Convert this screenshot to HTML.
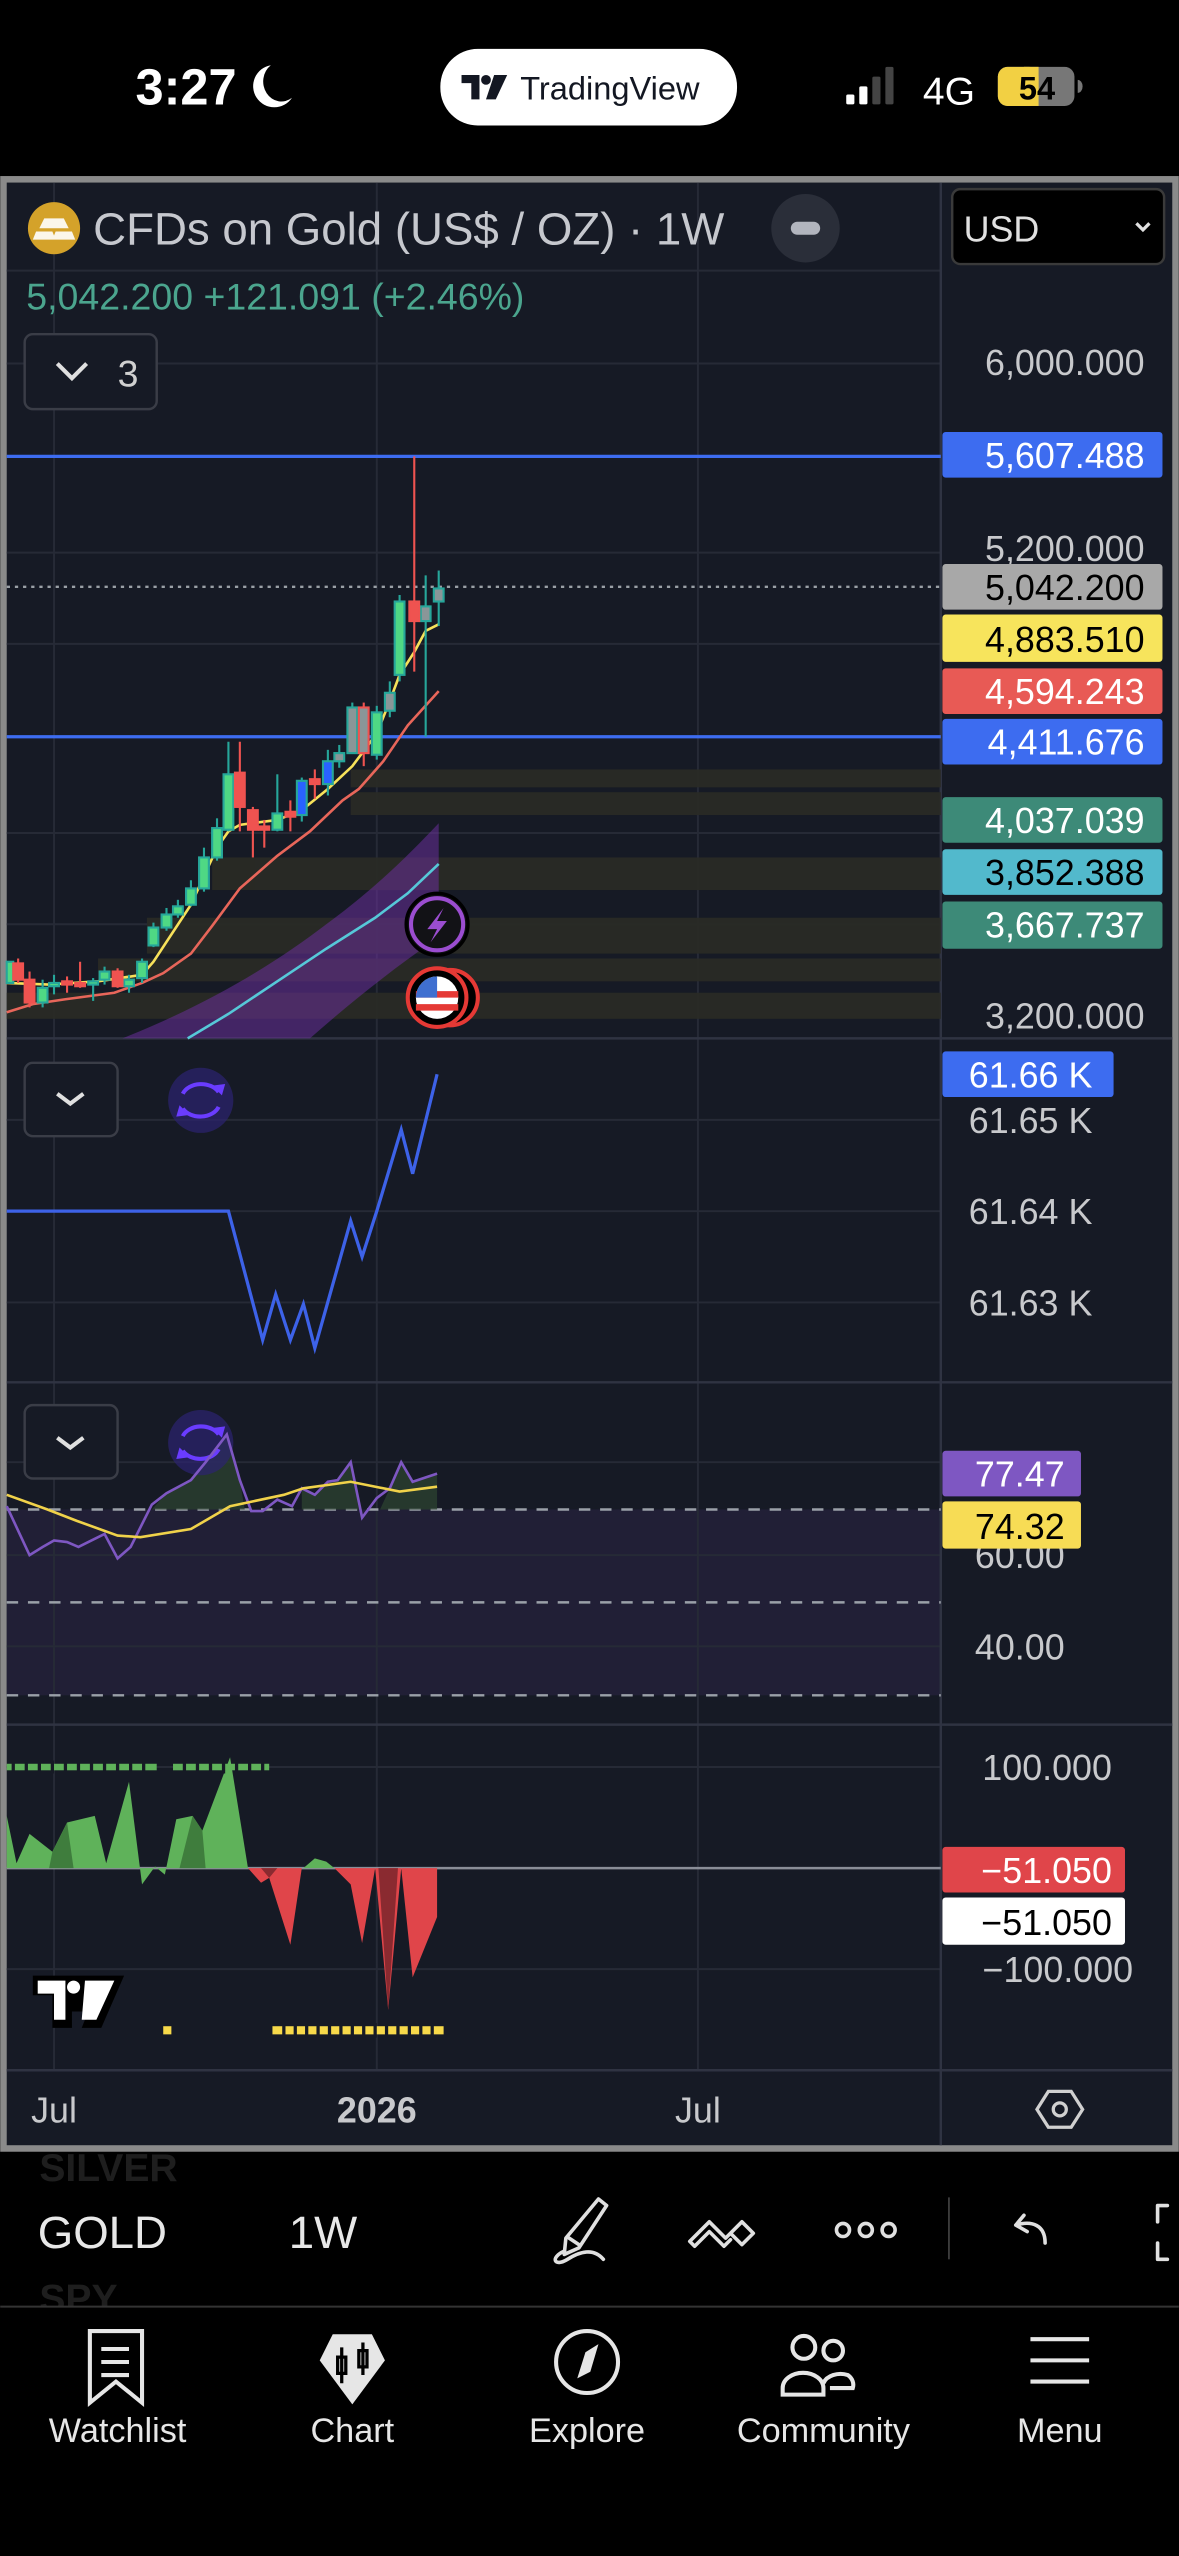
<!DOCTYPE html>
<html><head><meta charset="utf-8"><style>
html,body{margin:0;padding:0;background:#000;width:1179px;height:2556px;overflow:hidden}
svg{display:block}
text{font-family:"Liberation Sans",sans-serif}
</style></head><body>
<svg width="1179" height="2556" viewBox="0 0 723 1568" xmlns="http://www.w3.org/2000/svg">
<rect width="723" height="1568" fill="#000"/>
<!-- status bar -->
<text x="83" y="64" font-size="31" fill="#fff" font-weight="bold">3:27</text>
<path d="M166 40 a13 13 0 1 0 13 20 a10 11 0 0 1 -13 -20z" fill="#fff"/>
<rect x="270" y="30" width="182" height="47" rx="23" fill="#fff"/>
<path d="M283 46h11v15h-5v-10h-6z" fill="#131722"/><circle cx="298" cy="49" r="3" fill="#131722"/><path d="M303 46h8l-7 15h-6z" fill="#131722"/>
<text x="319" y="61" font-size="20" fill="#131722">TradingView</text>
<rect x="519" y="58" width="5" height="6" rx="1" fill="#fff"/><rect x="527" y="53" width="5" height="11" rx="1" fill="#fff"/><rect x="535" y="47" width="5" height="17" rx="1" fill="#444"/><rect x="543" y="41" width="5" height="23" rx="1" fill="#444"/>
<text x="566" y="64" font-size="24" fill="#fff">4G</text>
<rect x="612" y="41" width="47" height="24" rx="6" fill="#777"/><rect x="612" y="41" width="25" height="24" rx="6" fill="#f2d043"/><rect x="628" y="41" width="9" height="24" fill="#f2d043"/>
<text x="636" y="61" font-size="20" fill="#000" text-anchor="middle" font-weight="bold">54</text>
<path d="M661 49 a3 4 0 0 1 0 8z" fill="#777"/>
<!-- chart frame -->
<rect x="0" y="108" width="723" height="1212" fill="#8a8a8a"/>
<rect x="4" y="112" width="715" height="1204" fill="#161a25"/>
<rect x="4" y="926" width="573" height="114" fill="#211f36"/>
<g stroke="#262a36" stroke-width="1.2">
<line x1="33" y1="112" x2="33" y2="1270"/><line x1="231" y1="112" x2="231" y2="1270"/><line x1="428" y1="112" x2="428" y2="1270"/>
<line x1="4" y1="166" x2="577" y2="166"/><line x1="4" y1="223" x2="577" y2="223"/><line x1="4" y1="339" x2="577" y2="339"/><line x1="4" y1="395" x2="577" y2="395"/><line x1="4" y1="511" x2="577" y2="511"/><line x1="4" y1="567" x2="577" y2="567"/>
<line x1="4" y1="687" x2="577" y2="687"/><line x1="4" y1="743" x2="577" y2="743"/><line x1="4" y1="799" x2="577" y2="799"/>
<line x1="4" y1="897" x2="577" y2="897"/><line x1="4" y1="954" x2="577" y2="954"/><line x1="4" y1="1010" x2="577" y2="1010"/>
<line x1="4" y1="1084" x2="577" y2="1084"/><line x1="4" y1="1208" x2="577" y2="1208"/>
</g>
<g stroke="#2f3342" stroke-width="1.5">
<line x1="4" y1="637" x2="719" y2="637"/><line x1="4" y1="848" x2="719" y2="848"/><line x1="4" y1="1058" x2="719" y2="1058"/><line x1="4" y1="1270" x2="719" y2="1270"/>
<line x1="577" y1="112" x2="577" y2="1316"/>
</g>
<g fill="#2a2b25" opacity="0.9">
<rect x="215" y="472" width="362" height="11"/><rect x="215" y="486" width="362" height="14"/>
<rect x="130" y="526" width="447" height="20"/><rect x="90" y="563" width="487" height="22"/>
<rect x="60" y="588" width="517" height="14"/><rect x="4" y="609" width="573" height="16"/>
</g>
<path d="M75 637 C130 615 170 590 200 567 C230 545 250 525 269 505 L269 575 C240 595 215 615 190 637 Z" fill="#6a2f9a" opacity="0.55"/>
<line x1="4" y1="280" x2="577" y2="280" stroke="#3d6cf0" stroke-width="2"/>
<line x1="4" y1="452" x2="577" y2="452" stroke="#3d6cf0" stroke-width="2"/>
<line x1="4" y1="360" x2="577" y2="360" stroke="#9aa0a6" stroke-width="1.5" stroke-dasharray="2 3"/>
<polyline fill="none" stroke="#56c8d8" stroke-width="1.6" points="115,637 140,622 170,602 200,582 230,563 250,548 269,530"/>
<polyline fill="none" stroke="#e8665a" stroke-width="1.6" points="4,621 20,616 40,613 70,609 87,603 100,597 117,585 130,568 147,545 170,525 190,510 210,491 220,484 235,467 250,445 269,424"/>
<polyline fill="none" stroke="#f7e15a" stroke-width="1.6" points="4,603 30,604 60,602 87,598 94,590 117,555 133,520 140,510 147,506 170,503 185,497 201,484 216,470 231,450 239,430 245,414 254,400 261,387 269,383"/>
<g stroke-width="1.3">
<g stroke="#26a69a" fill="#4fd884">
<line x1="245" y1="365" x2="245" y2="418"/><rect x="242" y="369" width="6" height="45"/>
<line x1="231" y1="433" x2="231" y2="466"/><rect x="228" y="437" width="6" height="26"/>
<line x1="170" y1="475" x2="170" y2="510"/><rect x="167" y="499" width="6" height="10"/>
<line x1="140" y1="455" x2="140" y2="510"/><rect x="137" y="475" width="6" height="34"/>
<line x1="133" y1="502" x2="133" y2="528"/><rect x="130" y="508" width="6" height="18"/>
<line x1="125" y1="520" x2="125" y2="547"/><rect x="122" y="526" width="6" height="19"/>
<line x1="117" y1="540" x2="117" y2="556"/><rect x="114" y="545" width="6" height="10"/>
<line x1="109" y1="552" x2="109" y2="563"/><rect x="106" y="556" width="6" height="5"/>
<line x1="102" y1="557" x2="102" y2="571"/><rect x="99" y="561" width="6" height="8"/>
<line x1="94" y1="566" x2="94" y2="581"/><rect x="91" y="569" width="6" height="11"/>
<line x1="87" y1="588" x2="87" y2="603"/><rect x="84" y="590" width="6" height="10"/>
<line x1="79" y1="598" x2="79" y2="609"/><rect x="76" y="601" width="6" height="4"/>
<line x1="64" y1="593" x2="64" y2="604"/><rect x="61" y="596" width="6" height="5"/>
<line x1="57" y1="600" x2="57" y2="614"/><rect x="54" y="602" width="6" height="2"/>
<line x1="33" y1="598" x2="33" y2="610"/><rect x="30" y="603" width="6" height="2"/>
<line x1="26" y1="601" x2="26" y2="618"/><rect x="23" y="606" width="6" height="9"/>
<rect x="4" y="590" width="4" height="13"/>
</g>
<g stroke="#26a69a" fill="#8a9698">
<line x1="261" y1="353" x2="261" y2="452"/><rect x="258" y="372" width="6" height="9"/>
<line x1="269" y1="350" x2="269" y2="384"/><rect x="266" y="361" width="6" height="8"/>
<line x1="239" y1="418" x2="239" y2="440"/><rect x="236" y="425" width="6" height="11"/>
<line x1="216" y1="431" x2="216" y2="462"/><rect x="213" y="434" width="6" height="28"/>
<line x1="208" y1="457" x2="208" y2="471"/><rect x="205" y="462" width="6" height="5"/>
</g>
<g stroke="#26a69a" fill="#2962ff">
<line x1="201" y1="460" x2="201" y2="488"/><rect x="198" y="467" width="6" height="14"/>
<line x1="185" y1="477" x2="185" y2="504"/><rect x="182" y="479" width="6" height="21"/>
</g>
<g stroke="#ef5350" fill="#ef5350">
<line x1="254" y1="280" x2="254" y2="412"/><rect x="251" y="369" width="6" height="12"/>
<line x1="223" y1="431" x2="223" y2="470"/><rect x="220" y="434" width="6" height="28" fill="#8a9698"/>
<line x1="193" y1="472" x2="193" y2="490"/><rect x="190" y="478" width="6" height="3"/>
<line x1="178" y1="491" x2="178" y2="510"/><rect x="175" y="498" width="6" height="3"/>
<line x1="162" y1="503" x2="162" y2="520"/><rect x="159" y="507" width="6" height="2"/>
<line x1="155" y1="495" x2="155" y2="526"/><rect x="152" y="497" width="6" height="12"/>
<line x1="147" y1="455" x2="147" y2="510"/><rect x="144" y="474" width="6" height="21"/>
<line x1="72" y1="594" x2="72" y2="606"/><rect x="69" y="596" width="6" height="9"/>
<line x1="49" y1="590" x2="49" y2="606"/><rect x="46" y="603" width="6" height="2"/>
<line x1="41" y1="599" x2="41" y2="609"/><rect x="38" y="602" width="6" height="2"/>
<line x1="18" y1="596" x2="18" y2="618"/><rect x="15" y="601" width="6" height="14"/>
<line x1="11" y1="588" x2="11" y2="603"/><rect x="8" y="591" width="6" height="10"/>
</g>
</g>
<circle cx="268" cy="567" r="19" fill="#0e0e12" stroke="#000" stroke-width="2"/>
<circle cx="268" cy="567" r="16" fill="#121216" stroke="#9b4dd0" stroke-width="2.5"/>
<path d="M272 557 L262 570 L268 570 L264 578 L274 565 L268 565 Z" fill="#9b4dd0"/>
<circle cx="276" cy="612" r="17" fill="#000" stroke="#e53935" stroke-width="2.5"/>
<circle cx="268" cy="612" r="18" fill="#000" stroke="#e53935" stroke-width="2.5"/>
<circle cx="268" cy="612" r="13" fill="#fff"/>
<path d="M255 608h26v4h-26zM255 616h26v4h-26z" fill="#e53935"/>
<path d="M255 612 a13 13 0 0 1 13 -13 v13 z" fill="#3f6fd0"/>
<!-- header -->
<circle cx="33" cy="140" r="16" fill="#d4a22a"/>
<path d="M27 134h12l3 6h-18zM22 142h10l2 5h-14zM34 142h10l2 5h-14z" fill="#fff" opacity="0.9"/>
<text x="57" y="150" font-size="28" fill="#c6c8ce">CFDs on Gold (US$ / OZ) · 1W</text>
<circle cx="494" cy="140" r="21" fill="#2a2e39"/><rect x="485" y="136" width="18" height="8" rx="4" fill="#b2b5be"/>
<text x="16" y="190" font-size="23" fill="#4ba58e">5,042.200  +121.091 (+2.46%)</text>
<rect x="15" y="205" width="81" height="46" rx="5" fill="#161a25" stroke="#3a3d47" stroke-width="1.5"/>
<path d="M35 223l9 9l9 -9" fill="none" stroke="#e0e0e0" stroke-width="2.5"/>
<text x="72" y="237" font-size="23" fill="#d0d0d0">3</text>
<rect x="584" y="116" width="130" height="46" rx="5" fill="#000" stroke="#3a3a3a" stroke-width="1.5"/>
<text x="591" y="148" font-size="22" fill="#e0e0e0">USD</text>
<path d="M697 137l4 4l4 -4" fill="none" stroke="#e0e0e0" stroke-width="2"/>
<g font-size="22" text-anchor="end" fill="#c8c9cc">
<text x="702" y="230">6,000.000</text>
<text x="702" y="344">5,200.000</text>
<text x="702" y="631">3,200.000</text>
<text x="670" y="695">61.65 K</text>
<text x="670" y="751">61.64 K</text>
<text x="670" y="807">61.63 K</text>
<text x="653" y="962">60.00</text>
<text x="653" y="1018">40.00</text>
<text x="682" y="1092">100.000</text>
<text x="695" y="1216">−100.000</text>
</g>
<g font-size="22" text-anchor="end">
<rect x="578" y="265" width="135" height="28" rx="2" fill="#3d6cf0"/><text x="702" y="287" fill="#fff">5,607.488</text>
<rect x="578" y="346" width="135" height="28" rx="2" fill="#a8a8a8"/><text x="702" y="368" fill="#000">5,042.200</text>
<rect x="578" y="377" width="135" height="29" rx="2" fill="#f7e45c"/><text x="702" y="400" fill="#000">4,883.510</text>
<rect x="578" y="410" width="135" height="28" rx="2" fill="#e85a55"/><text x="702" y="432" fill="#fff">4,594.243</text>
<rect x="578" y="441" width="135" height="28" rx="2" fill="#3d6cf0"/><text x="702" y="463" fill="#fff">4,411.676</text>
<rect x="578" y="489" width="135" height="28" rx="2" fill="#3d8a78"/><text x="702" y="511" fill="#fff">4,037.039</text>
<rect x="578" y="521" width="135" height="28" rx="2" fill="#52b9cc"/><text x="702" y="543" fill="#000">3,852.388</text>
<rect x="578" y="553" width="135" height="29" rx="2" fill="#3d8a78"/><text x="702" y="575" fill="#fff">3,667.737</text>
<rect x="578" y="645" width="105" height="28" rx="2" fill="#3d6cf0"/><text x="670" y="667" fill="#fff">61.66 K</text>
<rect x="578" y="890" width="85" height="28" rx="2" fill="#7e57c2"/><text x="653" y="912" fill="#fff">77.47</text>
<rect x="578" y="921" width="85" height="29" rx="2" fill="#f7dc55"/><text x="653" y="944" fill="#000">74.32</text>
<rect x="578" y="1133" width="112" height="28" rx="2" fill="#e0454a"/><text x="682" y="1155" fill="#fff">−51.050</text>
<rect x="578" y="1164" width="112" height="29" rx="2" fill="#fff"/><text x="682" y="1187" fill="#000">−51.050</text>
</g>
<!-- pane 2 -->
<rect x="15" y="652" width="57" height="45" rx="5" fill="#161a25" stroke="#3a3d47" stroke-width="1.5"/>
<path d="M35 671l8 6l8 -6" fill="none" stroke="#e0e0e0" stroke-width="2.5"/>
<circle cx="123" cy="675" r="20" fill="#2c2470" opacity="0.7"/>
<path d="M112 671 a12 9 0 0 1 22 -1 M134 679 a12 9 0 0 1 -22 1" fill="none" stroke="#6a3cff" stroke-width="2.5"/>
<path d="M130 666 l6 6 l2 -7z M116 684 l-6 -6 l-2 7z" fill="#6a3cff"/>
<polyline fill="none" stroke="#3d62e8" stroke-width="2" points="4,743 140,743 161,822 169,794 178,822 186,800 193,827 215,749 222,771 231,743 246,693 253,720 268,659"/>
<!-- pane 3 RSI -->
<g stroke="#9aa0a8" stroke-width="1.5" stroke-dasharray="7 6"><line x1="4" y1="926" x2="577" y2="926"/><line x1="4" y1="983" x2="577" y2="983"/><line x1="4" y1="1040" x2="577" y2="1040"/></g>
<path d="M93 926 L102 916 L117 908 L126 897 L139 880 L147 908 L150 926Z M185 926 L185 913 L193 917 L201 909 L207 908 L215 897 L220 926Z M233 926 L239 913 L246 897 L253 909 L268 904 L268 926Z" fill="#2a4030" opacity="0.8"/>
<rect x="15" y="862" width="57" height="45" rx="5" fill="#161a25" stroke="#3a3d47" stroke-width="1.5"/>
<path d="M35 882l8 6l8 -6" fill="none" stroke="#e0e0e0" stroke-width="2.5"/>
<circle cx="123" cy="885" r="20" fill="#2c2470" opacity="0.7"/>
<path d="M112 881 a12 9 0 0 1 22 -1 M134 889 a12 9 0 0 1 -22 1" fill="none" stroke="#6a3cff" stroke-width="2.5"/>
<path d="M130 876 l6 6 l2 -7z M116 894 l-6 -6 l-2 7z" fill="#6a3cff"/>
<polyline fill="none" stroke="#7e57c2" stroke-width="1.6" points="4,924 18,954 26,949 33,945 41,946 48,949 56,945 64,941 72,956 80,949 93,923 102,916 117,908 126,897 139,880 147,908 154,927 161,927 170,920 179,924 185,913 193,917 201,909 207,908 215,897 222,931 231,919 239,913 246,897 253,909 268,904"/>
<polyline fill="none" stroke="#f0d24a" stroke-width="1.6" points="4,917 29,926 47,933 72,942 86,943 117,938 141,924 174,917 186,913 215,909 245,915 268,912"/>
<!-- pane 4 -->
<line x1="4" y1="1146" x2="577" y2="1146" stroke="#8a8e98" stroke-width="1.5"/>
<path d="M4 1146 L4 1114 L10 1143 L18 1125 L32 1136 L41 1118 L58 1114 L65 1143 L79 1093 L87 1156 L95 1145 L101 1150 L108 1116 L118 1114 L124 1123 L141 1078 L152 1146Z" fill="#5fb25a"/>
<path d="M30 1146 L32 1136 L41 1118 L45 1146Z M110 1146 L118 1114 L124 1123 L126 1146Z" fill="#3f7d3d"/>
<path d="M186 1146 L193 1140 L200 1142 L205 1146Z" fill="#5fb25a"/>
<path d="M152 1146 L160 1155 L165 1152 L178 1193 L185 1146Z M205 1146 L215 1156 L222 1192 L230 1146 L238 1233 L246 1146 L253 1213 L268 1176 L268 1146Z" fill="#e0454a"/>
<path d="M160 1146 L165 1152 L170 1146Z M232 1146 L238 1233 L244 1146Z" fill="#8a2a30"/>
<g fill="#5fb25a"><rect x="4" y="1082" width="92" height="4"/><rect x="106" y="1082" width="59" height="4"/></g>
<g stroke="#161a25" stroke-width="2"><path d="M8 1080v8M16 1080v8M24 1080v8M32 1080v8M40 1080v8M48 1080v8M56 1080v8M64 1080v8M72 1080v8M80 1080v8M88 1080v8M113 1080v8M121 1080v8M129 1080v8M137 1080v8M145 1080v8M153 1080v8M161 1080v8"/></g>
<rect x="100" y="1243" width="5" height="5" fill="#f7d94a"/>
<rect x="167" y="1243" width="105" height="5" fill="#f7d94a"/>
<g stroke="#161a25" stroke-width="2"><path d="M174 1241v9M181 1241v9M188 1241v9M195 1241v9M202 1241v9M209 1241v9M216 1241v9M223 1241v9M230 1241v9M237 1241v9M244 1241v9M251 1241v9M258 1241v9M265 1241v9"/></g>
<path d="M20 1212h56l-14 32h-12l4-10h-10v10h-12v-20h-12z" fill="#000"/>
<path d="M23 1215h17v24h-7v-16h-10z" fill="#fff"/><circle cx="45" cy="1219" r="4" fill="#fff"/><path d="M52 1215h18l-11 24h-9z" fill="#fff"/>
<text x="33" y="1302" font-size="22" fill="#c8c9cc" text-anchor="middle">Jul</text>
<text x="231" y="1302" font-size="22" fill="#c8c9cc" text-anchor="middle" font-weight="bold">2026</text>
<text x="428" y="1302" font-size="22" fill="#c8c9cc" text-anchor="middle">Jul</text>
<path d="M643 1283h14l7 11l-7 11h-14l-7 -11z" fill="none" stroke="#d0d0d0" stroke-width="2"/><circle cx="650" cy="1294" r="4" fill="none" stroke="#d0d0d0" stroke-width="2"/>
<!-- bottom toolbar -->
<clipPath id="cb"><rect x="0" y="1320" width="723" height="95"/></clipPath>
<g clip-path="url(#cb)">
<text x="24" y="1338" font-size="24" fill="#1e1e1e" font-weight="bold">SILVER</text>
<text x="24" y="1418" font-size="24" fill="#1e1e1e" font-weight="bold">SPY</text>
</g>
<text x="23" y="1379" font-size="28" fill="#e8e8e8">GOLD</text>
<text x="177" y="1379" font-size="28" fill="#e8e8e8">1W</text>
<g fill="none" stroke="#e0e0e0" stroke-width="2.2" stroke-linecap="round" stroke-linejoin="round">
<path d="M367 1349 l5 4 l-17 26 l-9 4 l1 -10 z M349 1373 l6 4"/>
<path d="M346 1381 c-9 4 -6 10 2 5 c8 -5 16 -7 22 0"/>
<path d="M423 1375 l12 -12 l10 10 l10 -10 l7 7 l-7 7 l-6 -6 M423 1375 l3 3 l9 -9 l9 9 l4 -4"/>
<circle cx="517" cy="1368" r="4"/><circle cx="531" cy="1368" r="4"/><circle cx="545" cy="1368" r="4"/>
<path d="M628 1359 l-5 6 l7 4 M623 1365 c10 -3 18 0 18 11"/>
<path d="M716 1353 h-6 v10 M710 1376 v10 h6"/>
</g>
<line x1="582" y1="1348" x2="582" y2="1386" stroke="#444" stroke-width="1"/>
<line x1="0" y1="1415" x2="723" y2="1415" stroke="#333" stroke-width="1.2"/>
<!-- nav -->
<g fill="none" stroke="#e6e6e6" stroke-width="2.5">
<path d="M55 1430h32v44l-16 -13l-16 13z"/><path d="M62 1441h17M62 1449h17M62 1457h17"/>
<circle cx="360" cy="1449" r="19"/>
<circle cx="493" cy="1440" r="7"/><circle cx="511" cy="1442" r="6"/>
<path d="M480 1465 a12 9 0 0 1 25 0 v4h-25z M505 1462 a11 8 0 0 1 15 -5 a10 8 0 0 1 3 8h-14"/>
<path d="M632 1435h36M632 1448h36M632 1461h36"/>
</g>
<path d="M204 1432h24l8 16l-20 27l-20 -27z" fill="#e6e6e6"/>
<path d="M207 1446h5v10h-5zM220 1442h5v10h-5zM209.5 1440v22M222.5 1437v20" stroke="#000" stroke-width="2" fill="none"/>
<path d="M367 1438 l-5 17 l-8 4 l5 -16z" fill="#e6e6e6"/>
<g font-size="21" fill="#e6e6e6" text-anchor="middle">
<text x="72" y="1498">Watchlist</text>
<text x="216" y="1498">Chart</text>
<text x="360" y="1498">Explore</text>
<text x="505" y="1498">Community</text>
<text x="650" y="1498">Menu</text>
</g>
</svg>
</body></html>
